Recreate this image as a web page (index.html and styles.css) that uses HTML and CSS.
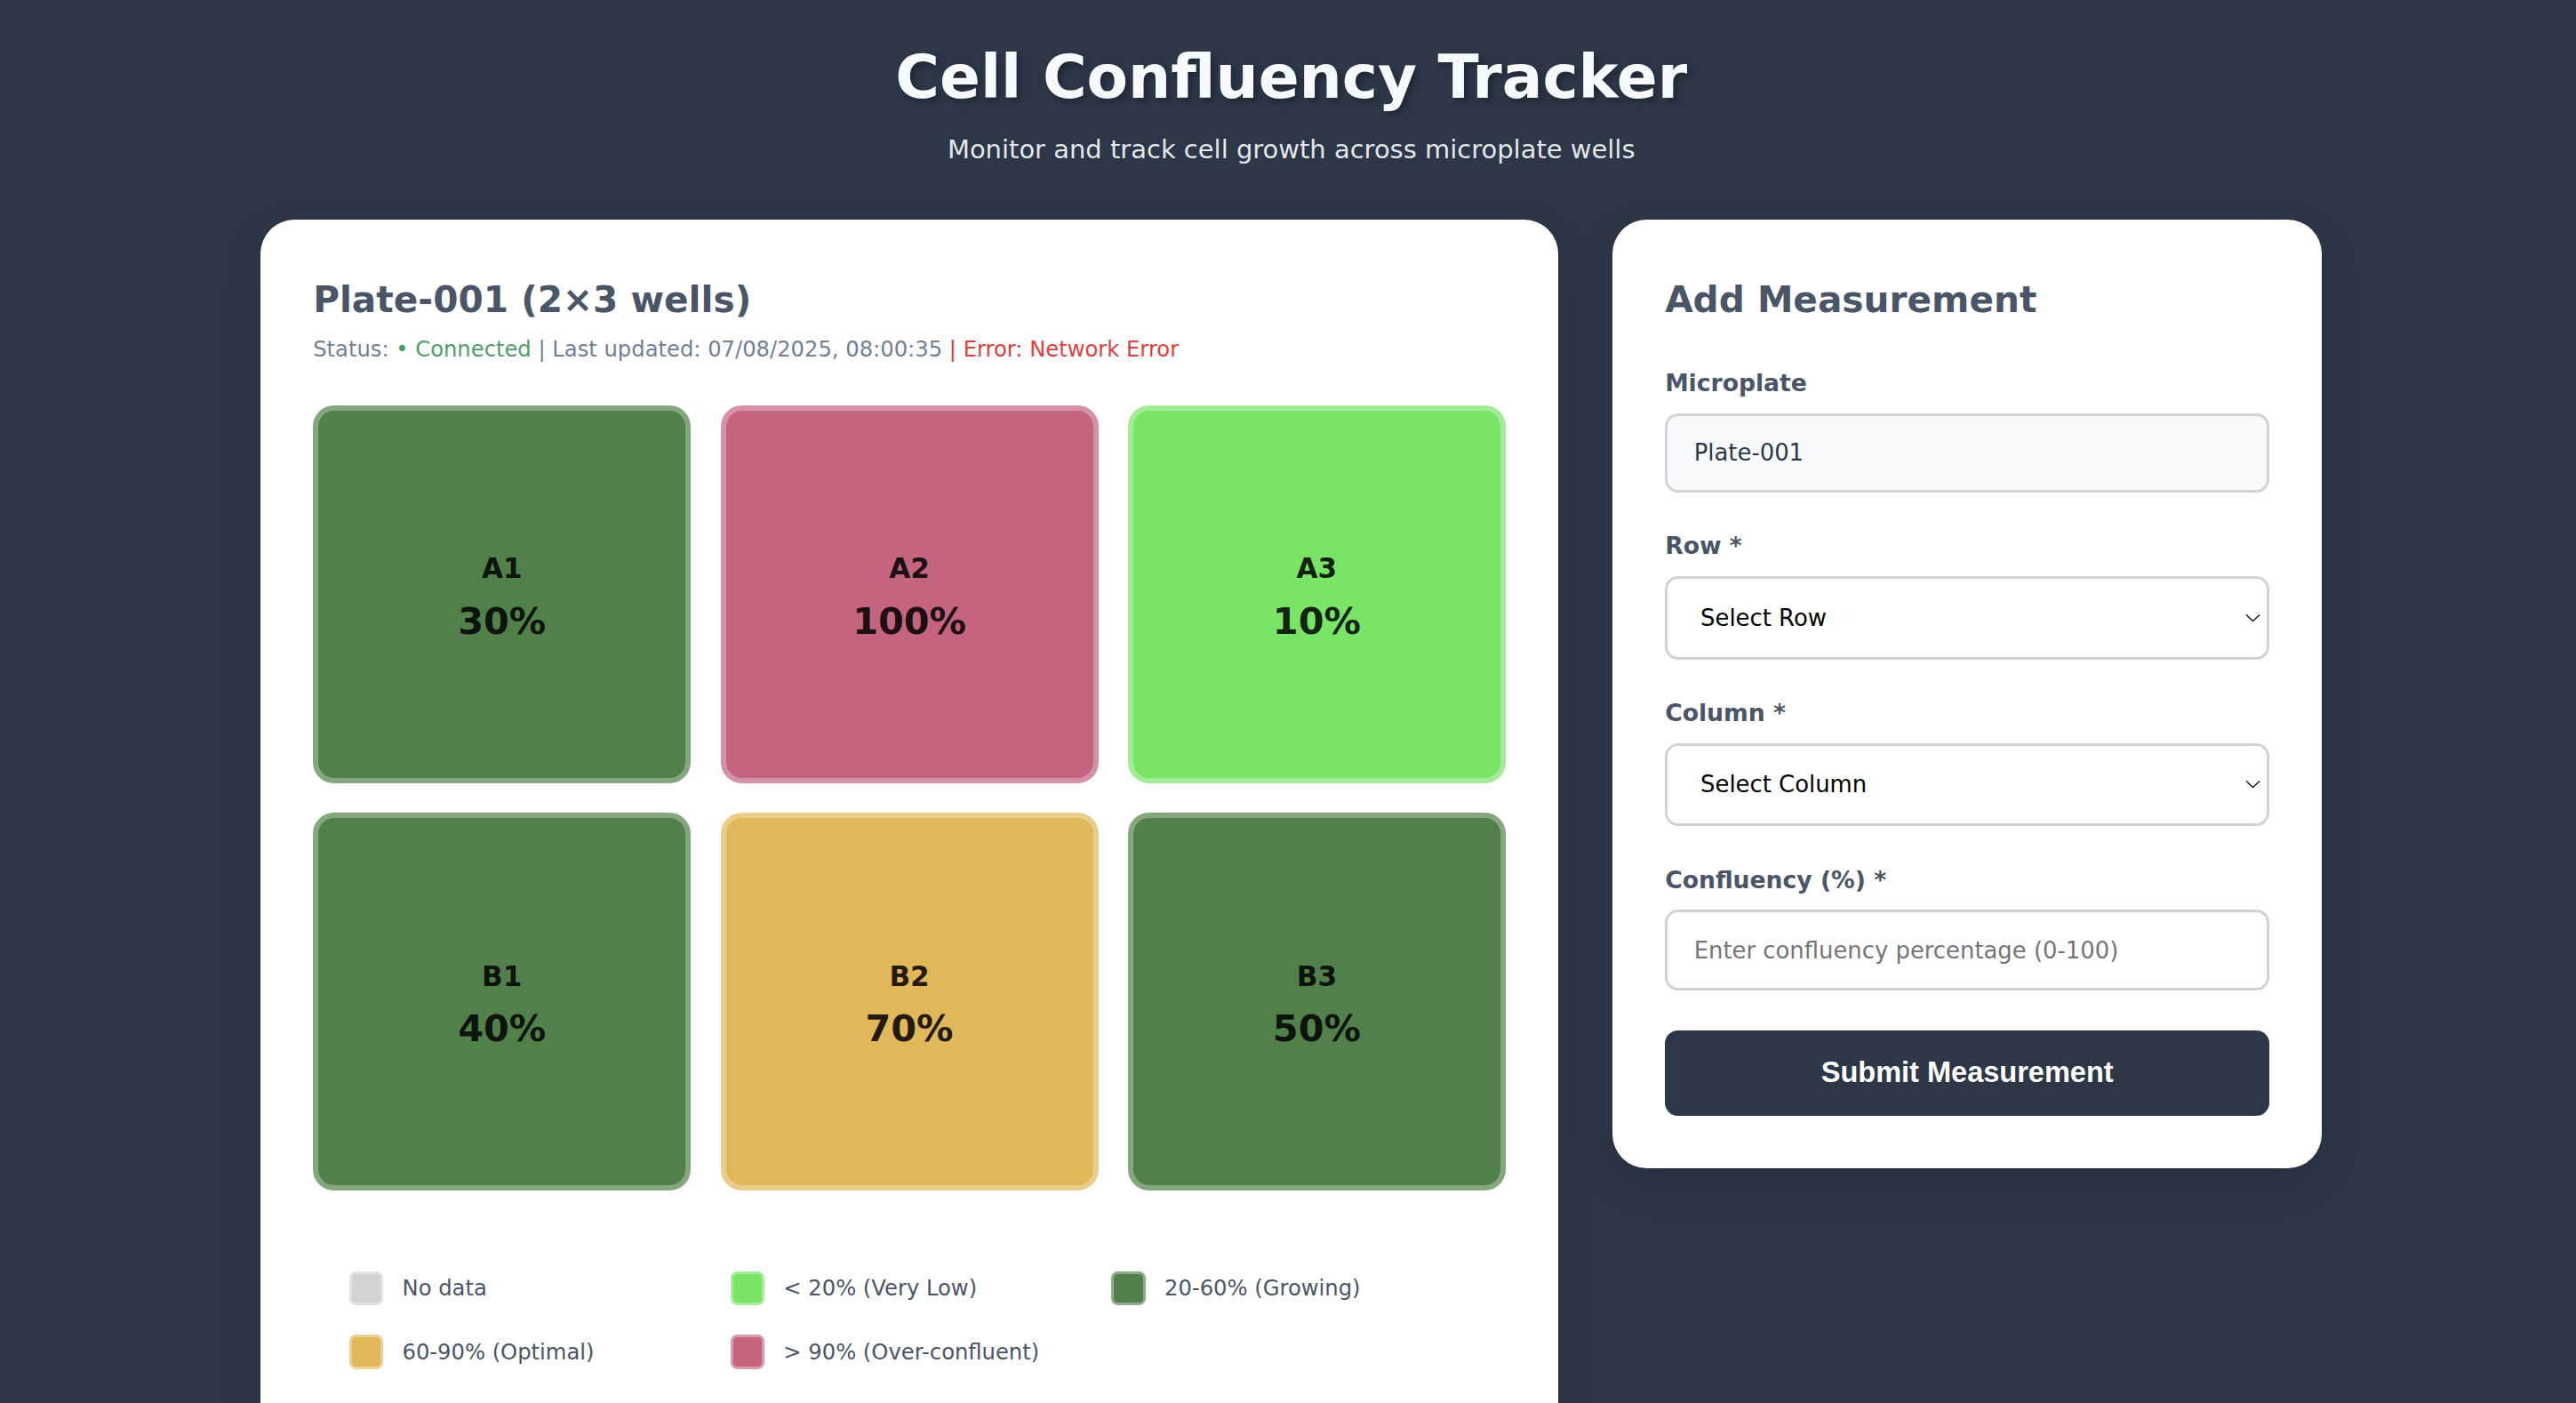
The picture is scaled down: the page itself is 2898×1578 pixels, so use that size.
FILE: index.html
```html
<!DOCTYPE html>
<html lang="en">
<head>
<meta charset="utf-8">
<title>Cell Confluency Tracker</title>
<link rel="stylesheet" href="styles.css">
</head>
<body>
  <header class="page-header">
    <h1 class="page-title">Cell Confluency Tracker</h1>
    <p class="page-subtitle">Monitor and track cell growth across microplate wells</p>
  </header>

  <main class="layout">
    <section class="card plate-card">
      <h2 class="card-title">Plate-001 (2×3 wells)</h2>
      <p class="status">Status: <span class="ok">• Connected</span> | Last updated: 07/08/2025, 08:00:35 <span class="err">| Error: Network Error</span></p>

      <div class="wells">
        <div class="well growing"><span class="well-id">A1</span><span class="well-value">30%</span></div>
        <div class="well over"><span class="well-id">A2</span><span class="well-value">100%</span></div>
        <div class="well low"><span class="well-id">A3</span><span class="well-value">10%</span></div>
        <div class="well growing"><span class="well-id">B1</span><span class="well-value">40%</span></div>
        <div class="well optimal"><span class="well-id">B2</span><span class="well-value">70%</span></div>
        <div class="well growing"><span class="well-id">B3</span><span class="well-value">50%</span></div>
      </div>

      <div class="legend">
        <div class="legend-item"><span class="swatch nodata"></span>No data</div>
        <div class="legend-item"><span class="swatch low"></span>&lt; 20% (Very Low)</div>
        <div class="legend-item"><span class="swatch growing"></span>20-60% (Growing)</div>
        <div class="legend-item"><span class="swatch optimal"></span>60-90% (Optimal)</div>
        <div class="legend-item"><span class="swatch over"></span>&gt; 90% (Over-confluent)</div>
      </div>
    </section>

    <section class="card form-card">
      <h2 class="card-title form-title">Add Measurement</h2>
      <form class="form">
        <div class="form-group">
          <label class="form-label" for="plate">Microplate</label>
          <input class="form-control readonly" id="plate" type="text" value="Plate-001" readonly>
        </div>
        <div class="form-group">
          <label class="form-label" for="row">Row *</label>
          <div class="select-wrap">
            <select class="form-control select" id="row">
              <option>Select Row</option>
              <option>A</option>
              <option>B</option>
            </select>
            <svg class="chevron" viewBox="0 0 17 9" aria-hidden="true"><path d="M1 1 L8.5 8 L16 1" fill="none" stroke="#1a1a1a" stroke-width="1.5"/></svg>
          </div>
        </div>
        <div class="form-group">
          <label class="form-label" for="col">Column *</label>
          <div class="select-wrap">
            <select class="form-control select" id="col">
              <option>Select Column</option>
              <option>1</option>
              <option>2</option>
              <option>3</option>
            </select>
            <svg class="chevron" viewBox="0 0 17 9" aria-hidden="true"><path d="M1 1 L8.5 8 L16 1" fill="none" stroke="#1a1a1a" stroke-width="1.5"/></svg>
          </div>
        </div>
        <div class="form-group last">
          <label class="form-label" for="conf">Confluency (%) *</label>
          <input class="form-control number" id="conf" type="number" placeholder="Enter confluency percentage (0-100)">
        </div>
        <button class="submit" type="button">Submit Measurement</button>
      </form>
    </section>
  </main>
</body>
</html>
```

FILE: styles.css
```css
html {
  font-size: 29.568px;
}

* {
  box-sizing: border-box;
}

body {
  margin: 0;
  padding-left: 0.25rem;
  background: #2d3748;
  font-family: "DejaVu Sans", Verdana, sans-serif;
  color: #2d3748;
}

.page-header {
  padding-top: 1.6rem;
  text-align: center;
}

.page-title {
  margin: 0;
  font-size: 2.29rem;
  line-height: 1.18;
  font-weight: bold;
  color: #f7fafc;
  text-shadow: 0.125rem 0.125rem 0.25rem rgba(0, 0, 0, 0.3);
}

.page-subtitle {
  margin: 0.82rem 0 0;
  font-size: 0.98rem;
  color: rgba(247, 250, 252, 0.92);
}

.layout {
  width: 78.44rem;
  margin: 2.1rem auto 0;
  display: grid;
  grid-template-columns: 1fr 27rem;
  column-gap: 2.0625rem;
  align-items: start;
}

.card {
  background: #ffffff;
  border-radius: 1.3rem;
  padding: 2rem;
  box-shadow: 0 0.6rem 1.5rem rgba(0, 0, 0, 0.12);
}

.card-title {
  margin: 0;
  font-size: 1.375rem;
  line-height: 1.5;
  font-weight: bold;
  color: #4a5568;
}

.status {
  margin: 0.35rem 0 0;
  font-size: 0.82rem;
  color: #718096;
}

.status .ok {
  color: #4f9d69;
}

.status .err {
  color: #e03e3e;
}

.wells {
  margin-top: 1.65rem;
  display: grid;
  grid-template-columns: repeat(3, 1fr);
  gap: 1.125rem;
}

.well {
  aspect-ratio: 1 / 1;
  padding-top: 0.25rem;
  border: 0.203rem solid rgba(255, 255, 255, 0.3);
  border-radius: 0.8rem;
  display: flex;
  flex-direction: column;
  align-items: center;
  justify-content: center;
  color: rgba(0, 0, 0, 0.87);
  font-weight: bold;
}

.well-id {
  font-size: 1.05rem;
}

.well-value {
  margin-top: 0.58rem;
  font-size: 1.4rem;
}

.growing { background-color: #52804a; }
.over { background-color: #c5647e; }
.low { background-color: #79e466; }
.optimal { background-color: #e0b85a; }
.nodata { background-color: #d3d3d3; }

.legend {
  margin-top: 1.8125rem;
  padding: 1.25rem 1.375rem;
  display: grid;
  grid-template-columns: repeat(3, 1fr);
  column-gap: 0.875rem;
  row-gap: 1.125rem;
}

.legend-item {
  display: flex;
  align-items: center;
  gap: 0.72rem;
  font-size: 0.82rem;
  color: #4a5568;
}

.swatch {
  width: 1.3rem;
  height: 1.3rem;
  flex: none;
  border-radius: 0.25rem;
  border: 0.102rem solid rgba(255, 255, 255, 0.35);
}

.form-title {
  margin-bottom: 1.6125rem;
}

.form {
  margin: 0;
}

.form-group {
  margin-bottom: 1.5rem;
}

.form-group.last {
  margin-bottom: 1.5rem;
}

.form-label {
  display: block;
  margin-bottom: 0.625rem;
  font-size: 0.9rem;
  font-weight: bold;
  color: #4a5568;
}

.form-control {
  display: block;
  width: 100%;
  margin: 0;
  padding: 0.9rem 1rem;
  border: 0.102rem solid #d3d3d3;
  border-radius: 0.5rem;
  background: #ffffff;
  font-family: "DejaVu Sans", Verdana, sans-serif;
  font-size: 0.875rem;
  color: #2d3748;
  outline: none;
}

.form-control.readonly {
  background: #f7fafc;
}

.form-control.number {
  padding-top: 0.93rem;
  padding-bottom: 0.93rem;
}

.form-control::placeholder {
  color: #757575;
}

.select-wrap {
  position: relative;
}

.select {
  -webkit-appearance: none;
  appearance: none;
  color: #000000;
  padding: 0.98rem 2rem 0.98rem 1.25rem;
}

.chevron {
  position: absolute;
  right: 0.34rem;
  top: 50%;
  width: 0.575rem;
  height: 0.305rem;
  transform: translateY(-50%);
  pointer-events: none;
}

.submit {
  display: block;
  width: 100%;
  padding: 1rem;
  border: none;
  border-radius: 0.5rem;
  background: #2d3748;
  color: #ffffff;
  font-family: "Liberation Sans", Arial, sans-serif;
  font-size: 1.1rem;
  font-weight: bold;
  cursor: pointer;
}
```
